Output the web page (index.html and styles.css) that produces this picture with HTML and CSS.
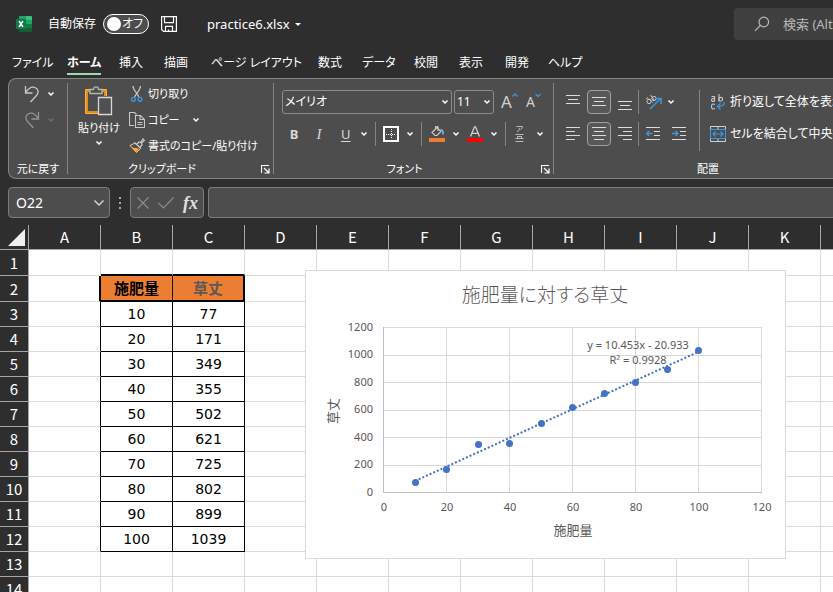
FILE: index.html
```html
<!DOCTYPE html>
<html lang="ja">
<head>
<meta charset="utf-8">
<title>practice6.xlsx</title>
<link rel="stylesheet" href="styles.css">
</head>
<body>
<svg class="defs" aria-hidden="true">
  <symbol id="chev" viewBox="0 0 8 6"><path d="M1.5 1.5 4 4 6.500 1.500" fill="none" stroke="currentColor" stroke-width="1.500"/></symbol>
  <symbol id="launch" viewBox="0 0 9 9"><path d="M8 .5H.5V8M3 3l4.500 4.500M8 3.500V8H3.500" fill="none" stroke="currentColor" stroke-width="1.200"/></symbol>
</svg>

<header class="titlebar">
  <svg class="logo" viewBox="0 0 16 16" aria-hidden="true">
    <path fill="#185c37" d="M3 8h13v7a1 1 0 0 1-1 1H4a1 1 0 0 1-1-1z"/>
    <path fill="#21a366" d="M4 0h6v4H3V1a1 1 0 0 1 1-1z"/>
    <path fill="#33c481" d="M10 0h5a1 1 0 0 1 1 1v3h-6z"/>
    <path fill="#107c41" d="M3 4h7v4H3zM10 8h6v4h-6z"/>
    <path fill="#21a366" d="M10 4h6v4h-6z"/>
    <rect fill="#107c41" y="3" width="10" height="10" rx="1"/>
    <path d="m3 5 4 6M7 5l-4 6" stroke="#fff" stroke-width="1.500"/>
  </svg>
  <span class="autosave" id="autosave-label">自動保存</span>
  <button class="toggle" aria-labelledby="autosave-label"><span class="knob"></span>オフ</button>
  <button class="save" aria-label="保存"><svg viewBox="0 0 16 16" width="16" height="16" fill="none" stroke="#fff" stroke-width="1.200"><path d="M.6.6h14.800v14.800H2.600l-2-2zM3.500.6v6h9v-6M4.500 15.400v-5h7v5M7.500 15.400v-2"/></svg></button>
  <button class="filename">practice6.xlsx<span class="caret"></span></button>
  <label class="search"><svg viewBox="0 0 16 16" width="16" height="16" fill="none" stroke="#b8b8b8" stroke-width="1.200"><circle cx="9.800" cy="6" r="4.800"/><path d="M6.300 9.500 1 14.800"/></svg><input type="text" placeholder="検索 (Alt+Q)" aria-label="検索"></label>
</header>

<nav class="tabs">
  <a href="#">ファイル</a><a href="#" class="active">ホーム</a><a href="#">挿入</a><a href="#">描画</a><a href="#">ページ レイアウト</a><a href="#">数式</a><a href="#">データ</a><a href="#">校閲</a><a href="#">表示</a><a href="#">開発</a><a href="#">ヘルプ</a>
</nav>

<section class="ribbon">
  <div class="group undo">
    <div class="tools">
      <button class="tool" aria-label="元に戻す"><svg viewBox="0 0 16 18" width="16" height="18" fill="none" stroke="#c8c8c8" stroke-width="1.300"><path d="M1.500 1v7h7M1.500 7.500C4 4 7.500 1 11 2.500s4 5 1.500 8L6.500 17"/></svg><svg class="chev"><use href="#chev"/></svg></button>
      <button class="tool dim" aria-label="やり直し"><svg viewBox="0 0 16 18" width="16" height="18" fill="none" stroke="#929292" stroke-width="1.300"><path d="M14.500 1v7h-7M14.500 7.500C12 4 8.500 1 5 2.500s-4 5-1.500 8L9.500 17"/></svg><svg class="chev"><use href="#chev"/></svg></button>
    </div>
    <h2>元に戻す</h2>
  </div>

  <div class="group clipboard">
    <div class="tools">
      <button class="paste">
        <svg viewBox="0 0 28 30" width="28" height="30" fill="none"><path d="M14 27.500H.5v-24H6M17 3.500h4.500V10" stroke="#ffb13d"/><path d="M13 26H2V5h5M17 5h3v5" stroke="#e28e1c" stroke-width="2"/><path d="M5 7.500v-4h3.500C8.500 0 13.500 0 13.500 3.500H17v4z" fill="#4d4d4d" stroke="#b5b5b5" stroke-width="1.300"/><path d="M13.500 11.500h13v17h-13z" fill="#505050" stroke="#d8d8d8" stroke-width="1.300"/></svg>
        <span>貼り付け</span><svg class="chev"><use href="#chev"/></svg>
      </button>
      <div class="actions">
        <button><svg viewBox="0 0 16 16" width="16" height="16" fill="none"><path d="M4 0c0 4 4 6.500 6 11M11.500 0c0 4-4 6.500-6 11" stroke="#c8c8c8" stroke-width="1.200"/><g stroke="#3b96dd" stroke-width="1.400"><circle cx="4.500" cy="13.300" r="1.900"/><circle cx="11" cy="13.300" r="1.900"/></g></svg>切り取り</button>
        <button><svg viewBox="0 0 16 16" width="16" height="16" fill="none" stroke="#c8c8c8" stroke-width="1.100"><path d="M5 13.500H.5V.5h5l2 2M6.500 3.500h5l4 4v8h-9zM11 3.500v4h4.500M8.500 10.500h5M8.500 12.500h5"/></svg>コピー<svg class="chev"><use href="#chev"/></svg></button>
        <button><svg viewBox="0 0 16 16" width="16" height="16"><path d="M1 7.500 7.500 14.500l4-4L6 5z" fill="#4d4d4d" stroke="#f3cf92"/><path d="m2.500 9.500 7.500 1L7.500 14z" fill="#ffa928"/><path d="m5.500 4.500 6.500 6M8 6l2-2 1.500.5L14 1l1.500 1.500L12.500 5l.5 2-2 2" fill="none" stroke="#c8c8c8" stroke-width="1.200"/></svg>書式のコピー/貼り付け</button>
      </div>
    </div>
    <h2>クリップボード</h2><button class="launch" aria-label="クリップボードの設定"><svg width="9" height="9"><use href="#launch"/></svg></button>
  </div>

  <div class="group font">
    <div class="tools">
      <div class="line">
        <label class="combo family"><select aria-label="フォント"><option>メイリオ</option></select><svg class="chev"><use href="#chev"/></svg></label>
        <label class="combo size"><select aria-label="サイズ"><option>11</option></select><svg class="chev"><use href="#chev"/></svg></label>
        <button class="grow" aria-label="拡大"><span>A</span><svg width="6" height="5" viewBox="0 0 6 5" fill="none" stroke="#3b96dd" stroke-width="1.300"><path d="M.5 3.500 3 1l2.500 2.500"/></svg></button>
        <button class="grow shrink" aria-label="縮小"><span>A</span><svg width="6" height="5" viewBox="0 0 6 5" fill="none" stroke="#3b96dd" stroke-width="1.300"><path d="M.5 1 3 3.500 5.500 1"/></svg></button>
      </div>
      <div class="line styles">
        <button class="bold">B</button><button class="italic">I</button><button class="underline"><u>U</u><svg class="chev"><use href="#chev"/></svg></button>
        <i class="sep"></i>
        <button aria-label="罫線"><svg viewBox="0 0 16 16" width="16" height="16" fill="none" stroke="#fff"><path d="M1 1h14v14H1z" stroke-width="2"/><path d="M8.500 3v10M3 8.500h10" stroke-dasharray="1 1"/></svg><svg class="chev"><use href="#chev"/></svg></button>
        <i class="sep"></i>
        <button aria-label="塗りつぶし"><svg viewBox="0 0 16 16" width="16" height="16" fill="none"><path d="M3 6.500 8 1.500l4 4-4 4H6zM6.500 3.500V1q1.500-2 2.500 0v4" stroke="#d0d0d0" stroke-width="1.100"/><path d="M11.500 3.500q3 0 2.500 5" stroke="#79b8e8" stroke-width="1.600"/><path fill="#ed7d31" d="M0 12h16v4H0z"/></svg><svg class="chev"><use href="#chev"/></svg></button>
        <button aria-label="文字の色"><svg viewBox="0 0 16 16" width="16" height="16" fill="none"><path d="M3.500 10.500 7.500.8h1l4 9.700M5 7.300h6" stroke="#d0d0d0" stroke-width="1.300"/><path fill="#f00" d="M0 12h16v4H0z"/></svg><svg class="chev"><use href="#chev"/></svg></button>
        <i class="sep"></i>
        <button class="ruby" aria-label="ふりがな"><svg viewBox="0 0 16 16" width="16" height="16" fill="none" stroke="#b8b8b8"><path d="M3.500.5h6q0 2-2 3M6.500 2q0 3-2.500 4M2.500 8.500h8M4 10.500h5M2.500 12.500h8M2.500 15.500h8M4.500 10.500v2M8.500 10.500v2"/></svg><svg class="chev"><use href="#chev"/></svg></button>
      </div>
    </div>
    <h2>フォント</h2><button class="launch" aria-label="フォントの設定"><svg width="9" height="9"><use href="#launch"/></svg></button>
  </div>

  <div class="group align">
    <div class="tools">
      <div class="pads">
        <button aria-label="上揃え"><svg viewBox="0 0 14 16"><path d="M0 1.500h14M2 5.500h10M0 9.500h14"/></svg></button>
        <button class="on" aria-label="上下中央揃え"><svg viewBox="0 0 14 16"><path d="M0 3.500h14M2 7.500h10M0 11.500h14"/></svg></button>
        <button aria-label="下揃え"><svg viewBox="0 0 14 16"><path d="M0 7.500h14M2 11.500h10M0 15.500h14"/></svg></button>
        <i class="sep"></i>
        <button class="rotate" aria-label="方向"><svg class="wide" viewBox="0 0 18 16"><g stroke="#c8c8c8"><ellipse cx="4" cy="7.500" rx="2" ry="2.200"/><path d="m4 4.500 3.500 4"/><ellipse cx="9" cy="4.500" rx="2" ry="2.200"/><path d="m5.500 1 3.500 5M1 5l2-1.500"/></g><path d="m5 15 10-10M10.500 4.500H16V10" stroke="#3b96dd" stroke-width="1.500"/></svg><svg class="chev"><use href="#chev"/></svg></button>
        <button aria-label="左揃え"><svg viewBox="0 0 14 16"><path d="M0 1.500h14M0 5.500h9M0 9.500h14M0 13.500h9"/></svg></button>
        <button class="on" aria-label="中央揃え"><svg viewBox="0 0 14 16"><path d="M0 1.500h14M2 5.500h10M0 9.500h14M2 13.500h10"/></svg></button>
        <button aria-label="右揃え"><svg viewBox="0 0 14 16"><path d="M0 1.500h14M5 5.500h9M0 9.500h14M5 13.500h9"/></svg></button>
        <i class="sep"></i>
        <button aria-label="インデントを減らす"><svg viewBox="0 0 14 16"><path d="M0 1.500h14M8 5.500h6M8 9.500h6M0 13.500h14"/><path d="M6.500 7.500H.8M3 5 .7 7.500 3 10" stroke="#3b96dd" stroke-width="1.400"/></svg></button>
        <button aria-label="インデントを増やす"><svg viewBox="0 0 14 16"><path d="M0 1.500h14M8 5.500h6M8 9.500h6M0 13.500h14"/><path d="M0 7.500h5.700M3.500 5l2.300 2.500L3.500 10" stroke="#3b96dd" stroke-width="1.400"/></svg></button>
      </div>
      <i class="sep tall"></i>
      <div class="wraps">
        <button><svg viewBox="0 0 16 16" width="16" height="16" fill="none"><g stroke="#c8c8c8" stroke-width="1.100"><path d="M1.500 2.500h3v5M4.500 4.500h-2q-2 1.500 0 3 1.500 0 2-1.500M9 0v7.500"/><circle cx="10.700" cy="5.300" r="1.900"/><path d="M5 10.500q-3.500-1.500-3.500 2t3.500 2"/></g><path d="M14 8.500q.5 4-6 4M10.500 9.500l-3 3 3 3" stroke="#3b96dd" stroke-width="1.500"/></svg>折り返して全体を表示する</button>
        <button><svg viewBox="0 0 16 16" width="16" height="16" fill="none"><path d="M.5 3V.5h15V3M8 .5V3M.5 13v2.500h15V13M8 13v2.500" stroke="#d0d0d0"/><path d="M.5 3.500h15v9H.5zM3 8h10M5.500 5.500 3 8l2.500 2.500M10.500 5.500 13 8l-2.500 2.500" stroke="#3b96dd" stroke-width="1.200"/></svg>セルを結合して中央揃え</button>
      </div>
    </div>
    <h2>配置</h2>
  </div>
</section>

<section class="formula">
  <label class="namebox"><input type="text" value="O22" aria-label="名前ボックス"><svg viewBox="0 0 12 8" width="12" height="8" fill="none" stroke="#d8d8d8" stroke-width="1.400"><path d="m1.500 1.500 4.500 4.500 4.500-4.500"/></svg></label>
  <span class="grip"><i></i><i></i><i></i></span>
  <div class="fxbox">
    <button aria-label="キャンセル"><svg viewBox="0 0 12 12" width="12" height="12"><path d="m.5.5 11 11M11.500.5l-11 11" stroke="#8c8c8c" stroke-width="1.200"/></svg></button>
    <button aria-label="入力"><svg viewBox="0 0 16 12" width="16" height="12"><path d="m.5 6 5 5L15.500.5" fill="none" stroke="#8c8c8c" stroke-width="1.200"/></svg></button>
    <button class="fx">fx</button>
  </div>
  <input class="entry" type="text" aria-label="数式バー">
</section>

<main class="sheet">
  <table>
    <colgroup><col class="rowcol"><col span="12"></colgroup>
    <thead><tr><th class="corner"><svg viewBox="0 0 17 17" width="17" height="17"><path fill="#f0f0f0" d="M17 0v17H0z"/></svg></th><th>A</th><th>B</th><th>C</th><th>D</th><th>E</th><th>F</th><th>G</th><th>H</th><th>I</th><th>J</th><th>K</th><th></th></tr></thead>
    <tbody>
      <tr class="lead"><th>1</th><td></td><td></td><td></td><td></td><td></td><td></td><td></td><td></td><td></td><td></td><td></td><td></td></tr>
      <tr class="heading"><th>2</th><td></td><td>施肥量</td><td>草丈</td><td></td><td></td><td></td><td></td><td></td><td></td><td></td><td></td><td></td></tr>
      <tr class="data"><th>3</th><td></td><td>10</td><td>77</td><td></td><td></td><td></td><td></td><td></td><td></td><td></td><td></td><td></td></tr>
      <tr class="data"><th>4</th><td></td><td>20</td><td>171</td><td></td><td></td><td></td><td></td><td></td><td></td><td></td><td></td><td></td></tr>
      <tr class="data"><th>5</th><td></td><td>30</td><td>349</td><td></td><td></td><td></td><td></td><td></td><td></td><td></td><td></td><td></td></tr>
      <tr class="data"><th>6</th><td></td><td>40</td><td>355</td><td></td><td></td><td></td><td></td><td></td><td></td><td></td><td></td><td></td></tr>
      <tr class="data"><th>7</th><td></td><td>50</td><td>502</td><td></td><td></td><td></td><td></td><td></td><td></td><td></td><td></td><td></td></tr>
      <tr class="data"><th>8</th><td></td><td>60</td><td>621</td><td></td><td></td><td></td><td></td><td></td><td></td><td></td><td></td><td></td></tr>
      <tr class="data"><th>9</th><td></td><td>70</td><td>725</td><td></td><td></td><td></td><td></td><td></td><td></td><td></td><td></td><td></td></tr>
      <tr class="data"><th>10</th><td></td><td>80</td><td>802</td><td></td><td></td><td></td><td></td><td></td><td></td><td></td><td></td><td></td></tr>
      <tr class="data"><th>11</th><td></td><td>90</td><td>899</td><td></td><td></td><td></td><td></td><td></td><td></td><td></td><td></td><td></td></tr>
      <tr class="data"><th>12</th><td></td><td>100</td><td>1039</td><td></td><td></td><td></td><td></td><td></td><td></td><td></td><td></td><td></td></tr>
      <tr><th>13</th><td></td><td></td><td></td><td></td><td></td><td></td><td></td><td></td><td></td><td></td><td></td><td></td></tr>
      <tr><th>14</th><td></td><td></td><td></td><td></td><td></td><td></td><td></td><td></td><td></td><td></td><td></td><td></td></tr>
    </tbody>
  </table>
  <svg class="chart" viewBox="0 0 481 289" role="img" aria-label="施肥量に対する草丈">
    <rect x=".5" y=".5" width="480" height="288" fill="#fff" stroke="#d9d9d9"/>
    <path class="gridlines" d="M78 57.500h379M78 85.500h379M78 112.500h379M78 140.500h379M78 167.500h379M78 195.500h379M141.500 57v165M204.500 57v165M267.500 57v165M330.500 57v165M393.500 57v165M456.500 57v165"/>
    <path class="axes" d="M78.500 57v165.500H457"/>
    <path class="trend" d="M110 211 393 82"/>
    <g fill="#4472c4"><circle cx="110.500" cy="212.500" r="3.500"/><circle cx="141.500" cy="199.500" r="3.500"/><circle cx="173.500" cy="174.500" r="3.500"/><circle cx="204.500" cy="173.500" r="3.500"/><circle cx="236.500" cy="153.500" r="3.500"/><circle cx="267.500" cy="137.500" r="3.500"/><circle cx="299.500" cy="123.500" r="3.500"/><circle cx="330.500" cy="112.500" r="3.500"/><circle cx="362.500" cy="99.500" r="3.500"/><circle cx="393.500" cy="80.500" r="3.500"/></g>
    <text class="title" x="240" y="32">施肥量に対する草丈</text>
    <g class="yvals"><text x="68" y="61">1200</text><text x="68" y="88">1000</text><text x="68" y="116">800</text><text x="68" y="143">600</text><text x="68" y="171">400</text><text x="68" y="198">200</text><text x="68" y="226">0</text></g>
    <g class="xvals"><text x="79" y="241">0</text><text x="142" y="241">20</text><text x="205" y="241">40</text><text x="268" y="241">60</text><text x="331" y="241">80</text><text x="394" y="241">100</text><text x="457" y="241">120</text><text x="333" y="79">y = 10.453x - 20.933</text><text x="333" y="94">R² = 0.9928</text></g>
    <text class="axis" x="268" y="265">施肥量</text>
    <text class="axis" transform="translate(33 141) rotate(-90)">草丈</text>
  </svg>
</main>
</body>
</html>
```
FILE: styles.css
```css
* { box-sizing: border-box; }

body {
  margin: 0;
  height: 100vh;
  display: flex;
  flex-direction: column;
  overflow: hidden;
  background: #2e2e2e;
  color: #fff;
  font: 13px/18px "Noto Sans", "Noto Sans CJK JP", sans-serif;
  font-feature-settings: "palt";
}

button, input, select {
  margin: 0;
  padding: 0;
  border: 0;
  background: none;
  color: inherit;
  font: inherit;
  font-feature-settings: inherit;
  outline: 0;
  white-space: nowrap;
}

button { display: flex; align-items: center; }
svg { display: block; flex: none; }
.defs { position: absolute; width: 0; height: 0; }
.chev { width: 8px; height: 6px; }

/* Title bar */
.titlebar { display: flex; align-items: center; height: 48px; padding-left: 16px; flex: none; overflow: hidden; }
.logo { width: 16px; height: 16px; }
.autosave { width: 48px; margin: 0 7px 0 16px; font-size: 12px; white-space: nowrap; }
.toggle {
  justify-content: space-between;
  width: 46px;
  height: 20px;
  padding: 0 5px 0 3px;
  border: 1px solid #fff;
  border-radius: 10px;
  background: #4d4d4d;
  font-size: 12px;
}
.knob { width: 14px; height: 14px; border-radius: 50%; background: #fff; }
.save { margin: 0 30px 0 12px; }
.filename { gap: 5px; }
.caret { border: 3px solid transparent; border-top-color: #fff; border-bottom: 0; }
.search {
  display: flex;
  align-items: center;
  gap: 13px;
  width: 99px;
  height: 32px;
  margin-left: auto;
  padding-left: 20px;
  border-radius: 4px 0 0 4px;
  background: #404040;
}
.search input { flex: 1; min-width: 0; }
.search input::placeholder { color: #b8b8b8; opacity: 1; }

/* Tabs */
.tabs {
  display: grid;
  grid-template-columns: 55px 52px 45px 47px 107px 44px 52px 45px 46px 43px auto;
  height: 30px;
  padding: 6px 0 3px 12px;
  flex: none;
  font-size: 12px;
}
.tabs a { justify-self: start; color: #fff; text-decoration: none; white-space: nowrap; }
.tabs .active { border-bottom: 2px solid #a0d8b3; font-weight: 700; }

/* Ribbon */
.ribbon {
  display: flex;
  height: 101px;
  margin-left: 8px;
  border: 1px solid #848484;
  border-right: 0;
  border-radius: 8px 0 0 8px;
  background: #4d4d4d;
  overflow: hidden;
  flex: none;
  font-size: 12px;
}
.group {
  position: relative;
  display: flex;
  flex-direction: column;
  justify-content: space-between;
  margin: 4px 0;
  border-right: 1px solid #848484;
  flex: none;
}
.group h2 { margin: 0; font-size: 11px; font-weight: 400; line-height: 10px; text-align: center; }
.launch { position: absolute; right: 3px; bottom: 0; }
.sep { width: 1px; height: 24px; background: #848484; }

.undo { width: 59px; }
.undo .tools { display: grid; gap: 8px; padding: 2px 0 0 15px; }
.tool { gap: 7px; }
.dim { color: #6c6c6c; }

.clipboard { width: 206px; font-size: 11px; }
.clipboard .tools { display: flex; gap: 8px; padding-left: 9px; }
.clipboard h2 { padding-right: 17px; }
.paste { flex-direction: column; width: 44px; padding-top: 3px; }
.paste span { margin: 3px 0; }
.actions { display: grid; grid-auto-rows: 26px; margin-top: -2px; }
.actions button { gap: 3px; }
.actions .chev { margin-left: 9px; }

.font { width: 280px; }
.font .tools { display: grid; gap: 8px; padding: 7px 0 0 8px; }
.font h2 { padding-right: 18px; }
.line { display: flex; align-items: center; height: 24px; gap: 2px; }
.combo { display: flex; align-items: center; height: 24px; padding: 0 2px; border: 1px solid #8c8c8c; border-radius: 3px; }
.combo select { flex: 1; min-width: 0; appearance: none; }
.family { width: 170px; }
.size { width: 40px; }
.grow { align-items: flex-start; width: 23px; margin-left: 5px; color: #d0d0d0; font-size: 17px; }
.grow.shrink { margin-left: 0; font-size: 14px; }
.styles { gap: 7px; }
.styles button { gap: 7px; }
.styles .bold, .styles .italic { justify-content: center; width: 18px; color: #d8d8d8; font-size: 13px; }
.styles .bold { margin-left: 3px; font-weight: 700; }
.styles .italic { font-family: "Liberation Serif", serif; font-size: 15px; font-style: italic; }
.underline u { color: #d8d8d8; font-size: 13px; text-underline-offset: 2px; }
.styles .underline { gap: 9px; margin-left: 6px; }

.align { flex: 1 0 310px; border: 0; }
.align .tools { display: flex; align-items: flex-start; padding: 7px 0 0 6px; }
.align h2 { width: 308px; }
.pads { display: grid; grid-template-columns: 26px 26px 26px 2px 26px 26px; row-gap: 8px; align-items: center; }
.pads button { justify-content: center; width: 24px; height: 24px; margin-left: 1px; border: 1px solid transparent; border-radius: 4px; }
.pads .on { border-color: #a0a0a0; background: #585858; }
.pads svg:not(.chev) { width: 14px; height: 16px; fill: none; stroke: #dcdcdc; overflow: visible; }
.pads .rotate { grid-column: span 2; justify-content: flex-start; width: 40px; padding-left: 3px; gap: 4px; }
.pads svg.wide:not(.chev) { width: 18px; }
.tall { height: 61px; margin-left: 7px; }
.wraps { display: grid; gap: 8px; padding-left: 10px; }
.wraps button { gap: 4px; height: 24px; }

/* Formula bar */
.formula { display: flex; align-items: center; height: 31px; margin: 8px 0 7px 8px; flex: none; }
.namebox, .fxbox, .entry { height: 31px; border: 1px solid #7c7c7c; border-radius: 4px; background: #4d4d4d; }
.namebox { display: flex; align-items: center; width: 102px; padding: 0 4px 0 7px; font-size: 14px; }
.namebox input { flex: 1; min-width: 0; }
.grip { display: grid; gap: 3px; margin: 0 9px; }
.grip i { width: 2px; height: 2px; background: #a8a8a8; }
.fxbox { display: flex; align-items: center; gap: 9px; width: 74px; padding-left: 6px; }
.fx { color: #e0e0e0; font: italic 700 18px/20px "Liberation Serif", serif; }
.entry { flex: 1; margin-left: 4px; border-right: 0; border-radius: 4px 0 0 4px; }

/* Sheet */
.sheet { position: relative; flex: 1; min-height: 0; overflow: hidden; }
.sheet table { width: 893px; table-layout: fixed; border-collapse: separate; border-spacing: 0; }
.rowcol { width: 29px; }
.sheet th, .sheet td { height: 25px; padding: 0; text-align: center; }
.sheet th {
  border-right: 1px solid #a6a6a6;
  border-bottom: 1px solid #a6a6a6;
  background: #2e2e2e;
  font: 15px/20px "Noto Sans CJK JP", sans-serif;
}
.sheet td {
  border-right: 1px solid #dcdcdc;
  border-bottom: 1px solid #dcdcdc;
  background: #fff;
  color: #000;
  font: 14px/20px "DejaVu Sans", "Noto Sans CJK JP", sans-serif;
}
.corner svg { margin-left: 8px; }
.sheet .lead > *, .sheet .heading > * { height: 26px; }
.sheet .lead td:nth-child(3), .sheet .lead td:nth-child(4) { border-bottom: 2px solid #000; }
.sheet .heading td:nth-child(3), .sheet .heading td:nth-child(4) {
  border-right: 1px solid #000;
  border-bottom: 2px solid #000;
  background: #ed7d31;
  font: 700 15px/20px "Noto Sans CJK JP", sans-serif;
}
.sheet .heading td:nth-child(2) { border-right: 2px solid #000; }
.sheet .heading td:nth-child(4) { border-right-width: 2px; color: #595959; }
.sheet .data td:nth-child(2) { border-right-color: #000; }
.sheet .data td:nth-child(3), .sheet .data td:nth-child(4) { border-color: #000; }

/* Chart floating over the cells */
.chart { position: absolute; left: 305px; top: 45px; width: 481px; height: 289px; font-family: "Noto Sans", "Noto Sans CJK JP", sans-serif; fill: #595959; }
.gridlines { stroke: #d9d9d9; fill: none; }
.axes { stroke: #bfbfbf; fill: none; }
.trend { stroke: #4472c4; stroke-width: 2; stroke-dasharray: 2 2; }
.chart text { font-size: 11px; }
.yvals { text-anchor: end; }
.xvals, .title, .axis { text-anchor: middle; }
.chart .title { font-size: 19px; font-weight: 300; }
.chart .axis { font-size: 13px; }
```
